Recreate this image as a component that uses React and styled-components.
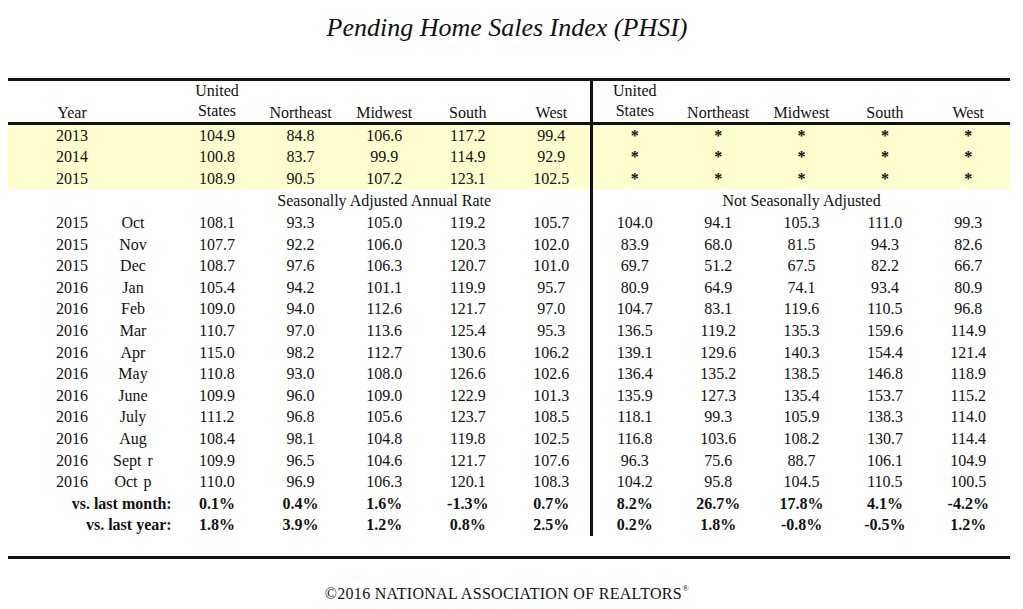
import React from "react";
import styled, { createGlobalStyle } from "styled-components";

const GlobalStyle = createGlobalStyle`
  html, body {
    margin: 0;
    padding: 0;
    background: #ffffff;
  }
  body {
    font-family: "Liberation Serif", "Times New Roman", serif;
    color: #111111;
  }
`;

const Page = styled.div`
  width: 1023px;
  height: 609px;
  overflow: hidden;
  box-sizing: border-box;
  padding-top: 8px;
`;

const Title = styled.h1`
  margin: 0;
  padding-right: 9px;
  text-align: center;
  font-size: 26px;
  line-height: 40px;
  font-style: italic;
  font-weight: normal;
  color: #111;
`;

const Table = styled.div`
  margin: 30px 0 0 8px;
  width: 1002px;
  border-top: 3px solid #111;
  border-bottom: 3px solid #111;
  padding-bottom: 20px;
`;

const Row = styled.div`
  display: grid;
  grid-template-columns: 92px 75.2px repeat(5, 83.6px) repeat(5, 83.36px);
  height: ${(p) => p.$height || 21.6}px;
  line-height: ${(p) => p.$height || 21.6}px;
  font-size: 16px;
  font-weight: ${(p) => (p.$bold ? "bold" : "normal")};
  background: ${(p) => (p.$highlight ? "#fefecf" : "transparent")};
`;

const HeaderRow = styled(Row)`
  height: 41px;
  line-height: 20px;
  border-bottom: 3px solid #111;
`;

const Cell = styled.div`
  box-sizing: border-box;
  height: 100%;
  text-align: ${(p) => p.$align || "center"};
  white-space: nowrap;
  grid-column: ${(p) => (p.$span ? `span ${p.$span}` : "auto")};
  ${(p) =>
    p.$divider
      ? `border-right: 3px solid #111; padding-left: 3px;`
      : ""}
`;

const YearCell = styled(Cell)`
  padding-left: 48px;
  padding-right: 12px;
`;

const MonthCell = styled(Cell)`
  padding-right: 9.2px;
  word-spacing: 2px;
`;

const LabelCell = styled(Cell)`
  grid-column: span 2;
  text-align: right;
  padding-right: 3.5px;
`;

const HeadCell = styled(Cell)`
  display: flex;
  flex-direction: column;
  justify-content: flex-end;
  align-items: center;
  padding-bottom: ${(p) => (p.$lift ? 2 : 0)}px;
`;

const HeadYearCell = styled(HeadCell)`
  padding-left: 48px;
  padding-right: 12px;
`;

const Star = styled.span`
  font-size: 16px;
  font-weight: bold;
`;

const Footer = styled.div`
  margin-top: 25px;
  padding-right: 9px;
  text-align: center;
  font-size: 16px;
  line-height: 20px;
  letter-spacing: 0.3px;
  color: #111;
`;

const Reg = styled.sup`
  font-size: 9px;
  vertical-align: 8px;
  line-height: 0;
`;

const regions = ["Northeast", "Midwest", "South", "West"];

const annual = [
  ["2013", "104.9", "84.8", "106.6", "117.2", "99.4"],
  ["2014", "100.8", "83.7", "99.9", "114.9", "92.9"],
  ["2015", "108.9", "90.5", "107.2", "123.1", "102.5"],
];

const monthly = [
  ["2015", "Oct", "108.1", "93.3", "105.0", "119.2", "105.7", "104.0", "94.1", "105.3", "111.0", "99.3"],
  ["2015", "Nov", "107.7", "92.2", "106.0", "120.3", "102.0", "83.9", "68.0", "81.5", "94.3", "82.6"],
  ["2015", "Dec", "108.7", "97.6", "106.3", "120.7", "101.0", "69.7", "51.2", "67.5", "82.2", "66.7"],
  ["2016", "Jan", "105.4", "94.2", "101.1", "119.9", "95.7", "80.9", "64.9", "74.1", "93.4", "80.9"],
  ["2016", "Feb", "109.0", "94.0", "112.6", "121.7", "97.0", "104.7", "83.1", "119.6", "110.5", "96.8"],
  ["2016", "Mar", "110.7", "97.0", "113.6", "125.4", "95.3", "136.5", "119.2", "135.3", "159.6", "114.9"],
  ["2016", "Apr", "115.0", "98.2", "112.7", "130.6", "106.2", "139.1", "129.6", "140.3", "154.4", "121.4"],
  ["2016", "May", "110.8", "93.0", "108.0", "126.6", "102.6", "136.4", "135.2", "138.5", "146.8", "118.9"],
  ["2016", "June", "109.9", "96.0", "109.0", "122.9", "101.3", "135.9", "127.3", "135.4", "153.7", "115.2"],
  ["2016", "July", "111.2", "96.8", "105.6", "123.7", "108.5", "118.1", "99.3", "105.9", "138.3", "114.0"],
  ["2016", "Aug", "108.4", "98.1", "104.8", "119.8", "102.5", "116.8", "103.6", "108.2", "130.7", "114.4"],
  ["2016", "Sept r", "109.9", "96.5", "104.6", "121.7", "107.6", "96.3", "75.6", "88.7", "106.1", "104.9"],
  ["2016", "Oct p", "110.0", "96.9", "106.3", "120.1", "108.3", "104.2", "95.8", "104.5", "110.5", "100.5"],
];

const changes = [
  ["vs. last month:", "0.1%", "0.4%", "1.6%", "-1.3%", "0.7%", "8.2%", "26.7%", "17.8%", "4.1%", "-4.2%"],
  ["vs. last year:", "1.8%", "3.9%", "1.2%", "0.8%", "2.5%", "0.2%", "1.8%", "-0.8%", "-0.5%", "1.2%"],
];

function HeaderHalf({ divider }) {
  return (
    <>
      <HeadCell $lift>
        <span>United</span>
        <span>States</span>
      </HeadCell>
      {regions.map((r, i) => (
        <HeadCell key={r} $divider={divider && i === regions.length - 1}>
          {r}
        </HeadCell>
      ))}
    </>
  );
}

function Values({ values }) {
  return values.map((v, i) => (
    <Cell key={i} $divider={i === 4}>
      {v}
    </Cell>
  ));
}

export default function App() {
  return (
    <>
      <GlobalStyle />
      <Page>
        <Title>Pending Home Sales Index (PHSI)</Title>
        <Table>
          <HeaderRow>
            <HeadYearCell>Year</HeadYearCell>
            <Cell />
            <HeaderHalf divider />
            <HeaderHalf />
          </HeaderRow>

          {annual.map(([year, ...vals]) => (
            <Row key={year} $highlight $height={21.33}>
              <YearCell>{year}</YearCell>
              <Cell />
              <Values values={vals} />
              {[0, 1, 2, 3, 4].map((i) => (
                <Cell key={i}>
                  <Star>*</Star>
                </Cell>
              ))}
            </Row>
          ))}

          <Row $height={23}>
            <Cell $span={2} />
            <Cell $span={5} $divider>
              Seasonally Adjusted Annual Rate
            </Cell>
            <Cell $span={5}>Not Seasonally Adjusted</Cell>
          </Row>

          {monthly.map(([year, month, ...vals]) => (
            <Row key={year + month}>
              <YearCell>{year}</YearCell>
              <MonthCell>{month}</MonthCell>
              <Values values={vals} />
            </Row>
          ))}

          {changes.map(([label, ...vals]) => (
            <Row key={label} $bold>
              <LabelCell>{label}</LabelCell>
              <Values values={vals} />
            </Row>
          ))}
        </Table>
        <Footer>
          ©2016 NATIONAL ASSOCIATION OF REALTORS<Reg>®</Reg>
        </Footer>
      </Page>
    </>
  );
}
